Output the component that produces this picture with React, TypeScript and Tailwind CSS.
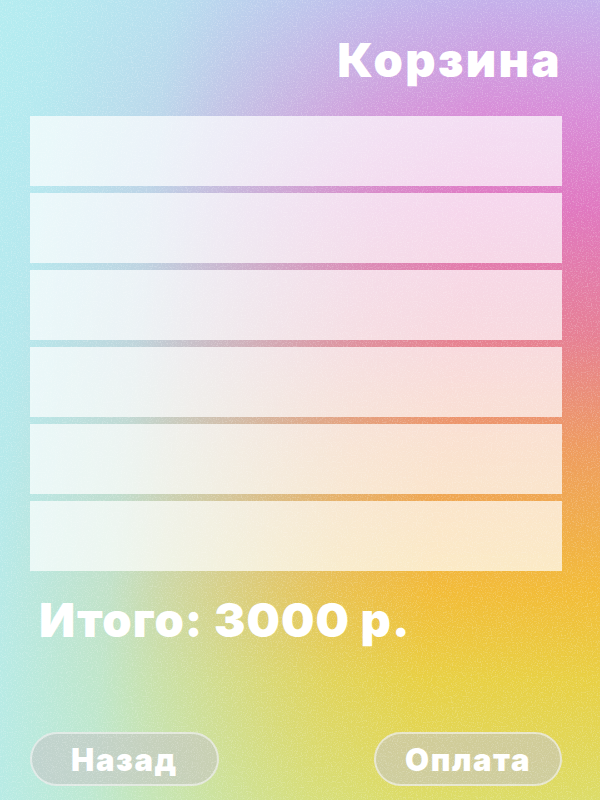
export default function App() {
  const rows = [0, 1, 2, 3, 4, 5];
  return (
    <div className="relative w-[600px] h-[800px] overflow-hidden flex flex-col font-['Inter',sans-serif] text-white bg-[linear-gradient(96deg,#b4ecf0_0%,rgba(180,236,240,0.96)_8%,rgba(180,236,240,0.78)_25%,rgba(180,236,240,0.6)_33%,rgba(180,236,240,0.28)_50%,rgba(180,236,240,0.14)_58%,rgba(180,236,240,0)_72%),linear-gradient(180deg,#c4b0ea_0%,#d88ed8_14%,#e078c0_26%,#e68094_42%,#ee9c60_56%,#f2bc38_74%,#e8d044_85%,#dcdc68_100%)]">
      <h1 className="mt-[32px] pr-[38px] text-right text-[47px] leading-[56px] font-black tracking-[2.4px]">Корзина</h1>
      <div className="mt-[28px] mx-[30px] w-[532px] flex flex-col gap-[7px]">
        {rows.map((r) => (
          <div key={r} className="h-[70px] bg-white/70" />
        ))}
      </div>
      <div className="mt-[20px] ml-[39px] text-[47px] leading-[58px] font-black tracking-[1.1px]">Итого: 3000 р.</div>
      <div className="mt-auto mb-[14px] ml-[30px] w-[532px] flex justify-between">
        <button className="w-[189px] h-[54px] rounded-full border-2 border-white/50 bg-[#c4c4c4]/60 text-[31px] font-black leading-none tracking-[1.6px]">Назад</button>
        <button className="w-[188px] h-[54px] rounded-full border-2 border-white/50 bg-[#c4c4c4]/60 text-[31px] font-black leading-none tracking-[1.6px]">Оплата</button>
      </div>
      <svg className="absolute inset-0 pointer-events-none opacity-[0.2]" width="600" height="800">
        <filter id="grain" x="0" y="0" width="100%" height="100%">
          <feTurbulence type="fractalNoise" baseFrequency="0.8" numOctaves="2" />
          <feColorMatrix type="matrix" values="0 0 0 0 1  0 0 0 0 1  0 0 0 0 1  0 0 0 4 -2" />
        </filter>
        <rect width="600" height="800" filter="url(#grain)" />
      </svg>
    </div>
  );
}
